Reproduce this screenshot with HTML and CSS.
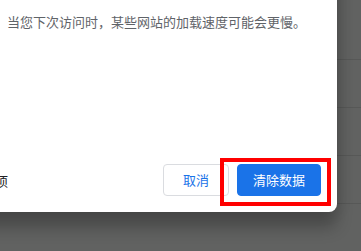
FILE: index.html
```html
<html>

<head>
    <link rel="stylesheet" href="styles.css">
</head>

<body>
    <div class="settings">
        <div class="settings__row"></div>
        <div class="settings__row"></div>
        <div class="settings__row"></div>
        <div class="settings__row"></div>
    </div>

    <section class="dialog">
        <div class="dialog__body">
            <div class="option">
                <span class="option__box"></span>
                <div class="option__text">
                    <p class="option__sub">当您下次访问时，某些网站的加载速度可能会更慢。</p>
                </div>
            </div>
        </div>
        <div class="dialog__footer">
            <span class="footer__note">更多选项</span>
            <div class="button__group">
                <button class="button button--cancel">取消</button>
                <button class="button button--action">清除数据</button>
            </div>
        </div>
    </section>

    <div class="highlight"></div>
</body>

</html>
```

FILE: styles.css
```css
body {
    margin: 0;
    padding: 0;
    width: 361px;
    height: 251px;
    overflow: hidden;
    position: relative;
    background-color: #616261;
    font-family: "Noto Sans CJK SC", "Noto Sans", sans-serif;
    font-size: 13px;
}

div.settings {
    padding-top: 12px;
}

div.settings__row {
    height: 47px;
    border-bottom: 1px solid #575857;
}

section.dialog {
    position: absolute;
    left: -51px;
    top: -40px;
    width: 388px;
    height: 252px;
    box-sizing: border-box;
    display: flex;
    flex-flow: column;
    padding: 0 16px 16px 20px;
    background-color: #fff;
    border-radius: 8px;
    box-shadow: 0 0 16px rgba(0, 0, 0, 0.12), 0 16px 16px rgba(0, 0, 0, 0.24);
}

div.dialog__body {
    flex: 1 1 auto;
    padding-top: 52px;
}

div.option {
    display: flex;
    flex-flow: row nowrap;
}

span.option__box {
    flex: 0 0 18px;
    height: 18px;
    margin-right: 20px;
}

p.option__sub {
    margin: 0;
    line-height: 20px;
    color: #5f6368;
    white-space: nowrap;
}

div.dialog__footer {
    display: flex;
    flex-flow: row nowrap;
    justify-content: space-between;
    align-items: center;
}

span.footer__note {
    margin-left: -13px;
    color: #202124;
    white-space: nowrap;
}

div.button__group {
    display: flex;
    flex-flow: row nowrap;
    gap: 8px;
}

button.button {
    height: 32px;
    min-width: 66px;
    padding: 0 15px;
    border-radius: 4px;
    font-family: "Noto Sans CJK SC", "Noto Sans", sans-serif;
    font-size: 13px;
    line-height: 30px;
}

button.button--cancel {
    background-color: #fff;
    border: 1px solid #dadce0;
    color: #1a73e8;
}

button.button--action {
    background-color: #1a73e8;
    border: 1px solid #1a73e8;
    color: #fff;
}

div.highlight {
    position: absolute;
    left: 220px;
    top: 158px;
    width: 111px;
    height: 48px;
    box-sizing: border-box;
    border: 4px solid #ff0000;
}
```
